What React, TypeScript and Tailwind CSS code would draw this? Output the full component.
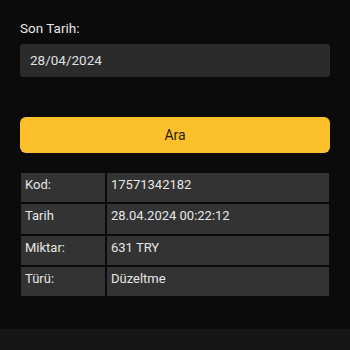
import React from "react";

const rows: [string, string][] = [
  ["Kod:", "17571342182"],
  ["Tarih", "28.04.2024 00:22:12"],
  ["Miktar:", "631 TRY"],
  ["Türü:", "Düzeltme"],
];

export default function App() {
  return (
    <div
      className="w-[350px] h-[350px] bg-[#0b0b0b] flex flex-col overflow-hidden"
      style={{ fontFamily: "Roboto, 'Noto Sans', sans-serif" }}
    >
      <div className="flex-1 flex flex-col px-5 pt-[18px]">
        <div className="text-[13.5px] leading-5 text-[#e6e6e6]">Son Tarih:</div>
        <div className="mt-[6px] h-[33px] rounded-[3px] bg-[#2b2b2b] flex items-center pl-[10px] text-[13.5px] text-[#e0e0e0]">
          28/04/2024
        </div>
        <button className="mt-[40px] h-[36px] w-full rounded-[6px] bg-[#fcc02c] text-[#2a2106] text-[14px] flex items-center justify-center">
          Ara
        </button>
        <div className="mt-[20px] mx-[1px] grid grid-cols-[84px_1fr] gap-[2px]">
          {rows.map(([k, v]) => (
            <React.Fragment key={k}>
              <div className="h-[29.3px] bg-[#333333] pl-[4px] pt-[2px] text-[13px] leading-5 text-[#e6e6e6]">{k}</div>
              <div className="h-[29.3px] bg-[#333333] pl-[4px] pt-[2px] text-[13px] leading-5 text-[#e6e6e6]">{v}</div>
            </React.Fragment>
          ))}
        </div>
      </div>
      <div className="h-[21px] bg-[#161616]" />
    </div>
  );
}
